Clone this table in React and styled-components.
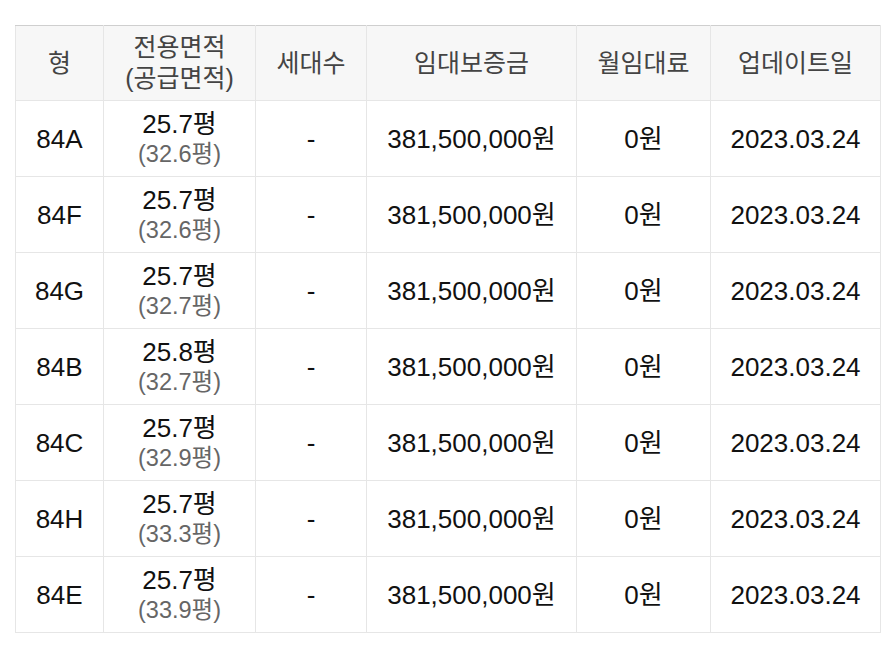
import React from 'react';
import styled, { createGlobalStyle } from 'styled-components';

const GlobalStyle = createGlobalStyle`
  body {
    margin: 0;
    background: #fff;
    font-family: "Liberation Sans", Arial, "Noto Sans CJK KR", sans-serif;
  }
`;

const Wrap = styled.div`
  padding: 25px 13px 0 15px;
`;

const Table = styled.table`
  width: 865px;
  border-collapse: collapse;
  table-layout: fixed;
  border-top: 1px solid #cfcfcf;
`;

const Th = styled.th`
  height: 74px;
  padding: 0;
  background: #f7f7f7;
  border: 1px solid #e6e6e6;
  border-top: 1px solid #cfcfcf;
  color: #444;
  font-size: 25px;
  font-weight: 400;
  line-height: 31px;
  text-align: center;
  vertical-align: middle;
`;

const Td = styled.td`
  height: 75px;
  padding: 0;
  border: 1px solid #e6e6e6;
  color: #111;
  font-size: 26px;
  line-height: 30px;
  text-align: center;
  vertical-align: middle;
`;

const Sub = styled.div`
  color: #666;
  font-size: 23.5px;
  line-height: 30px;
`;

const columns = [
  { w: 88, label: '형' },
  { w: 152, label: ['전용면적', '(공급면적)'] },
  { w: 111, label: '세대수' },
  { w: 210, label: '임대보증금' },
  { w: 134, label: '월임대료' },
  { w: 170, label: '업데이트일' },
];

const rows = [
  ['84A', '25.7', '32.6'],
  ['84F', '25.7', '32.6'],
  ['84G', '25.7', '32.7'],
  ['84B', '25.8', '32.7'],
  ['84C', '25.7', '32.9'],
  ['84H', '25.7', '33.3'],
  ['84E', '25.7', '33.9'],
];

export default function App() {
  return (
    <>
      <GlobalStyle />
      <Wrap>
        <Table>
          <colgroup>
            {columns.map((c, i) => (
              <col key={i} style={{ width: c.w }} />
            ))}
          </colgroup>
          <thead>
            <tr>
              {columns.map((c, i) => (
                <Th key={i}>
                  {Array.isArray(c.label) ? (
                    <>
                      {c.label[0]}
                      <br />
                      {c.label[1]}
                    </>
                  ) : (
                    c.label
                  )}
                </Th>
              ))}
            </tr>
          </thead>
          <tbody>
            {rows.map(([type, area, supply]) => (
              <tr key={type}>
                <Td>{type}</Td>
                <Td>
                  {area}평
                  <Sub>({supply}평)</Sub>
                </Td>
                <Td>-</Td>
                <Td>381,500,000원</Td>
                <Td>0원</Td>
                <Td>2023.03.24</Td>
              </tr>
            ))}
          </tbody>
        </Table>
      </Wrap>
    </>
  );
}
